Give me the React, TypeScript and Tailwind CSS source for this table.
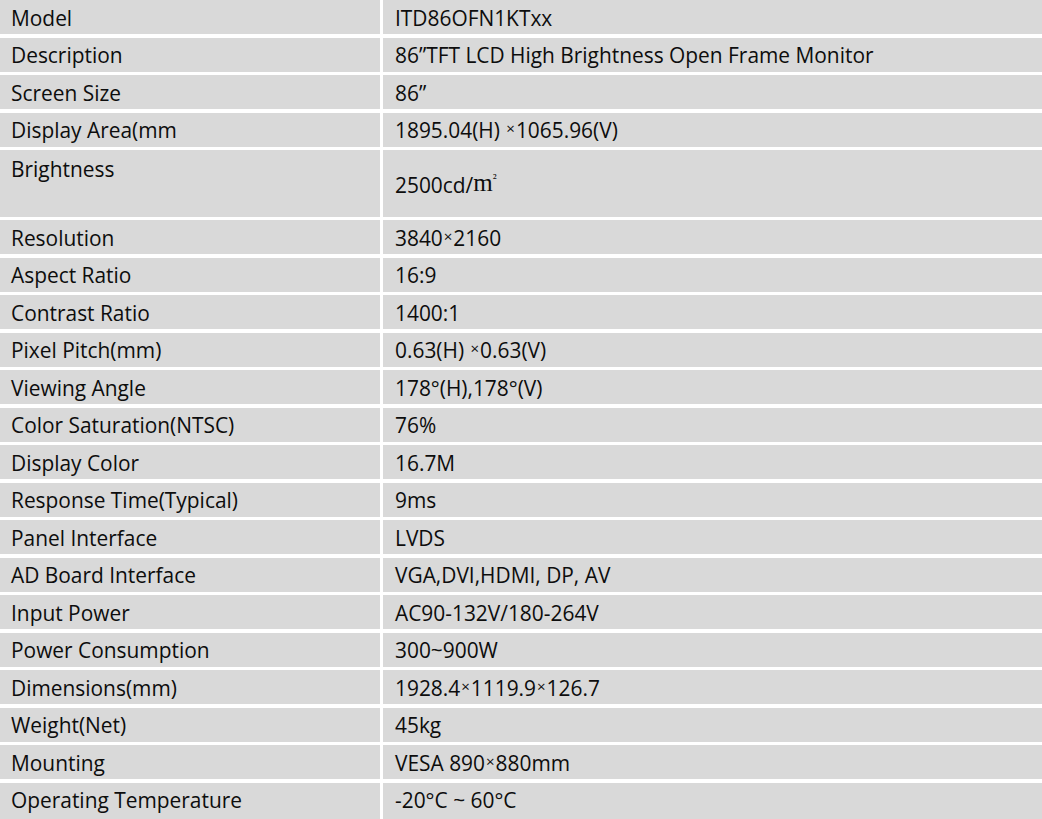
import React from "react";

const X = () => (
  <span className="inline-block text-[15px] leading-none align-[4px] mx-[1px]">×</span>
);

type Row = { label: string; value: React.ReactNode; tall?: boolean };

const rows: Row[] = [
  { label: "Model", value: "ITD86OFN1KTxx" },
  { label: "Description", value: "86”TFT LCD High Brightness Open Frame Monitor" },
  { label: "Screen Size", value: "86”" },
  {
    label: "Display Area(mm",
    value: (
      <>
        1895.04(H) <X />1065.96(V)
      </>
    ),
  },
  {
    label: "Brightness",
    tall: true,
    value: (
      <>
        2500cd/
        <span className="inline-block align-[2px] text-[25px]" style={{ fontFamily: '"Liberation Serif", serif' }}>
          m<span className="inline-block text-[13px] align-[9px]">²</span>
        </span>
      </>
    ),
  },
  {
    label: "Resolution",
    value: (
      <>
        3840<X />2160
      </>
    ),
  },
  { label: "Aspect Ratio", value: "16:9" },
  { label: "Contrast Ratio", value: "1400:1" },
  {
    label: "Pixel Pitch(mm)",
    value: (
      <>
        0.63(H) <X />0.63(V)
      </>
    ),
  },
  { label: "Viewing Angle", value: "178°(H),178°(V)" },
  { label: "Color Saturation(NTSC)", value: "76%" },
  { label: "Display Color", value: "16.7M" },
  { label: "Response Time(Typical)", value: "9ms" },
  { label: "Panel Interface", value: "LVDS" },
  { label: "AD Board Interface", value: "VGA,DVI,HDMI, DP, AV" },
  { label: "Input Power", value: "AC90-132V/180-264V" },
  { label: "Power Consumption", value: "300~900W" },
  {
    label: "Dimensions(mm)",
    value: (
      <>
        1928.4<X />1119.9<X />126.7
      </>
    ),
  },
  { label: "Weight(Net)", value: "45kg" },
  {
    label: "Mounting",
    value: (
      <>
        VESA 890<X />880mm
      </>
    ),
  },
  { label: "Operating Temperature", value: "-20°C ~ 60°C" },
];

export default function App() {
  return (
    <div
      className="w-[1042px] h-[819px] bg-white overflow-hidden text-[#0d0d0d] text-[20.9px]"
      style={{ fontFamily: '"Open Sans", "Noto Sans CJK SC", sans-serif' }}
    >
      <div className="grid grid-cols-[380px_1fr] gap-x-[3px] gap-y-[3.5px]">
        {rows.map((r, i) => {
          const last = i === rows.length - 1;
          const h = r.tall ? "h-[66.5px]" : last ? "h-[40px] pb-[5px]" : "h-[34px] pt-[2px]";
          return (
            <React.Fragment key={r.label}>
              <div className={`bg-[#d9d9d9] pl-[11px] ${h} ${r.tall ? "" : "flex items-center"} leading-none whitespace-nowrap`}>
                {r.tall ? (
                  <div className="h-[36px] pt-[2px] flex items-center">{r.label}</div>
                ) : (
                  <span>{r.label}</span>
                )}
              </div>
              <div className={`bg-[#d9d9d9] pl-[12px] ${h} flex items-center leading-none whitespace-nowrap`}>
                <span>{r.value}</span>
              </div>
            </React.Fragment>
          );
        })}
      </div>
    </div>
  );
}
